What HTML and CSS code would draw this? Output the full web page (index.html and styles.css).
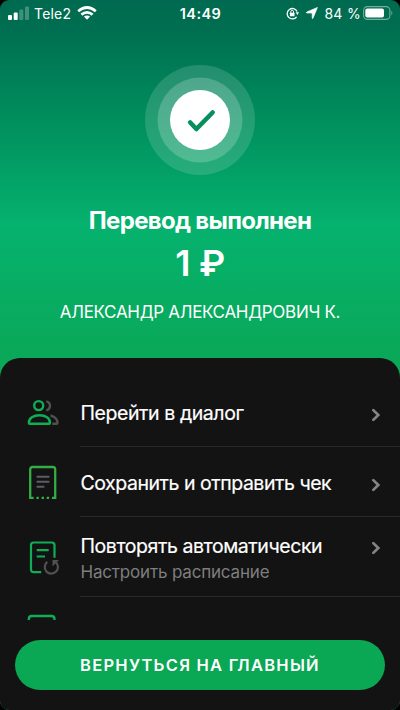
FILE: index.html
```html
<!DOCTYPE html>
<html lang="ru">
<head>
<meta charset="utf-8">
<title>Перевод выполнен</title>
<link rel="stylesheet" href="styles.css">
</head>
<body>
<main class="screen">
  <header class="status">
    <div class="status-left">
      <svg class="signal" width="22" height="14" viewBox="0 0 22 14" fill="#fff"><rect x="0" y="9" width="4" height="5" rx="1"/><rect x="5.7" y="6.5" width="4" height="7.5" rx="1"/><rect x="11.3" y="3.5" width="4" height="10.5" rx="1" opacity=".25"/><rect x="17" y="0.5" width="4" height="13.5" rx="1" opacity=".25"/></svg>
      <span class="carrier">Tele2</span>
      <svg class="wifi" width="20" height="14" viewBox="0 0 20 14" fill="none" stroke="#fff" stroke-width="2.7"><path d="M1.200 5.200Q10-2.200 18.800 5.200"/><path d="M4.400 8.600Q10 4 15.600 8.600"/><path d="M6.900 10.600Q10 8.400 13.100 10.600L10 13.800Z" fill="#fff" stroke="none"/></svg>
    </div>
    <time class="clock">14:49</time>
    <div class="status-right">
      <svg width="13" height="13" viewBox="0 0 13 13" fill="none" stroke="#fff" stroke-width="1.3"><path d="M10.6 9.8A5.2 5.2 0 1 1 11.1 4.5"/><path d="M9.7 5.3h3.3l-1.6 2.7z" fill="#fff" stroke="none"/><rect x="3.9" y="5.8" width="4.6" height="3.5" rx=".5" fill="#fff" stroke="none"/><path d="M4.8 6V4.8a1.4 1.4 0 0 1 2.8 0V6" stroke-width="1"/></svg>
      <svg class="arrow" width="12" height="12" viewBox="0 0 12 12"><path d="M11.400.500 7 11.200Q6.400 12.200 6.200 11V6H1Q-.3 5.600.8 5Z" fill="#fff" stroke="#fff" stroke-width=".7" stroke-linejoin="round"/></svg>
      <span class="percent">84 %</span>
      <svg class="battery" width="30" height="14" viewBox="0 0 30 14"><rect x=".6" y=".6" width="26.300" height="12.800" rx="3.800" fill="none" stroke="#fff" stroke-opacity=".45" stroke-width="1.100"/><rect x="2.300" y="2.400" width="18.700" height="9.200" rx="2" fill="#fff"/><path d="M28.500 4.600q1.600 2.400 0 4.800z" fill="#fff" opacity=".5"/></svg>
    </div>
  </header>
  <section class="result">
    <svg class="success" width="110" height="110" viewBox="0 0 110 110"><circle cx="55" cy="55" r="55" fill="#fff" opacity=".14"/><circle cx="55" cy="55" r="42.5" fill="#fff" opacity=".2"/><circle cx="55" cy="55" r="30" fill="#fff"/><path d="M45.200 57.500 51.400 64 67.600 47.500" fill="none" stroke="#078f5d" stroke-width="4.600" stroke-linecap="round" stroke-linejoin="round"/></svg>
    <h1 class="title">Перевод выполнен</h1>
    <p class="amount">1 ₽</p>
    <p class="recipient">АЛЕКСАНДР АЛЕКСАНДРОВИЧ К.</p>
  </section>
  <section class="sheet">
    <ul class="actions">
      <li class="action">
        <svg class="icon" width="34" height="36" viewBox="0 -1.200 34 36" fill="none" stroke-width="2.4"><g stroke="#0fae55"><circle cx="12.7" cy="10.4" r="4.5"/><path d="M3.900 28.600h19.200q.9 0 .9-1C24 22.900 19.500 20 13.500 20S2.800 22.900 2.800 27.600q0 1 1.100 1Z"/></g><g stroke="#515151"><path d="M20.300 6.100a4.600 4.600 0 0 1 0 9M24.500 20.100c4.400 1.400 7 4.500 7 7.500q0 1-1 1h-4.200" stroke-linejoin="round"/></g></svg>
        <div class="copy"><span class="label">Перейти в диалог</span></div>
        <svg class="chevron" width="10" height="14" viewBox="0 0 10 14"><path d="m2.300 2.100 5 4.900-5 4.900"/></svg>
      </li>
      <li class="action">
        <svg class="icon" width="34" height="36" viewBox="0 -.400 34 36" fill="none" stroke-width="2.300"><path d="M4.200 34.500V5.100q0-2.500 2.500-2.500h20q2.500 0 2.500 2.500v29.400" stroke="#34ad45"/><path d="M5 33.400h2.600M10.400 33.400h2.400M15.600 33.400h2.400M20.700 33.400h2.400M26 33.400h3" stroke="#34ad45"/><path d="M11.400 12.300h11.200M11.400 17.300h11.200M11.400 22.300h6.200" stroke="#5d5c68" stroke-width="2" stroke-linecap="round"/></svg>
        <div class="copy"><span class="label l2">Сохранить и отправить чек</span></div>
        <svg class="chevron" width="10" height="14" viewBox="0 0 10 14"><path d="m2.300 2.100 5 4.900-5 4.900"/></svg>
      </li>
      <li class="action action-tall">
        <svg class="icon" width="34" height="36" viewBox="0 -.500 34 36" fill="none" stroke-width="2.200"><path d="M15.200 32.700H7.600q-2.600 0-2.600-2.600V5.600Q5 3 7.600 3h18.300q2.600 0 2.600 2.600v12.600M10.700 10.700h12M10.700 17h8.300" stroke="#0fae55"/><path d="M21.300 22.300a6.600 6.600 0 1 0 8.200.1" stroke="#515151" stroke-width="2.200"/><path d="M26.500 20.500H33l-6.500 6.400z" fill="#515151"/></svg>
        <div class="copy"><span class="label">Повторять автоматически</span><span class="hint">Настроить расписание</span></div>
        <svg class="chevron" width="10" height="14" viewBox="0 0 10 14"><path d="m2.300 2.100 5 4.900-5 4.900"/></svg>
      </li>
      <li class="action action-cut">
        <svg class="icon" width="34" height="36" viewBox="0 -.500 34 36"><path d="M2.800 12V7.500q0-3 3-3h19.700q3 0 3 3V12" fill="none" stroke="#0fae55" stroke-width="2.300"/></svg>
      </li>
    </ul>
    <footer class="footer"><button class="home" type="button">ВЕРНУТЬСЯ НА ГЛАВНЫЙ</button></footer>
  </section>
</main>
</body>
</html>
```
FILE: styles.css
```css
* { box-sizing: border-box; }
body { margin: 0; background: #000; font-family: Inter, "Liberation Sans", sans-serif; color: #fff; }
.screen { width: 400px; height: 710px; display: flex; flex-direction: column; overflow: hidden; border-radius: 9px; background: linear-gradient(180deg, #006a50 0, #006e50 28px, #008b5c 110px, #05b26e 225px, #0aa858 357px); }
.status { height: 27px; flex: none; display: grid; grid-template-columns: 1fr auto 1fr; align-items: center; padding: 0 7px 1px 8px; font-size: 14px; }
.status-left, .status-right { display: flex; align-items: center; }
.status-right { justify-content: flex-end; }
.status svg { flex: none; display: block; }
.carrier { margin: 0 6px 0 4px; letter-spacing: .2px; }
.clock { font-weight: 600; font-size: 14.500px; letter-spacing: .45px; }
.arrow { margin: 0 6px 0 7px; }
.percent { letter-spacing: .3px; white-space: nowrap; margin-right: 2px; }
.result { height: 331px; flex: none; display: flex; flex-direction: column; align-items: center; padding-top: 38px; }
.success { display: block; flex: none; }
.title, .amount, .recipient { margin: 0; white-space: nowrap; }
.title { margin-top: 30px; font-size: 24px; line-height: 32px; font-weight: 700; letter-spacing: -.68px; }
.amount { margin-top: 4px; font-size: 36px; line-height: 44px; font-weight: 600; letter-spacing: -.3px; }
.recipient { margin-top: 16px; font-size: 17px; line-height: 22px; letter-spacing: -.3px; }
.sheet { flex: 1; min-height: 0; display: flex; flex-direction: column; background: #131313; border-radius: 20px 20px 0 0; padding-top: 19px; }
.actions { height: 243px; flex: none; overflow: hidden; list-style: none; margin: 0; padding: 0; }
.action { height: 70px; display: grid; grid-template-columns: 54.500px 1fr 29px; align-items: center; padding-left: 26px; background: linear-gradient(#292929, #292929) 80px 100% / 320px 1px no-repeat; }
.action-tall { height: 80px; }
.action-cut { height: 70px; align-items: start; background: none; padding-top: 14px; }
.icon { display: block; }
.copy { display: flex; flex-direction: column; white-space: nowrap; padding-top: 2px; }
.action-tall .copy { padding-top: 3px; }
.label { font-size: 19.500px; line-height: 26px; letter-spacing: -.42px; -webkit-text-stroke: .2px #fff; }
.l2 { letter-spacing: -.46px; }
.hint { color: #7e7e7e; font-size: 17px; line-height: 24px; margin-top: 1px; letter-spacing: -.18px; }
.chevron { margin-top: 6px; fill: none; stroke: #858585; stroke-width: 2.700; stroke-linecap: round; }
.action-tall .chevron { align-self: start; margin-top: 24px; }
.footer { padding: 20px 15px 0; }
.home { display: block; width: 370px; height: 50px; border: 0; border-radius: 25px; background: #0aa754; color: #fff; font: 600 16.500px/50px Inter, "Liberation Sans", sans-serif; letter-spacing: 1.250px; padding: 0; }
```
